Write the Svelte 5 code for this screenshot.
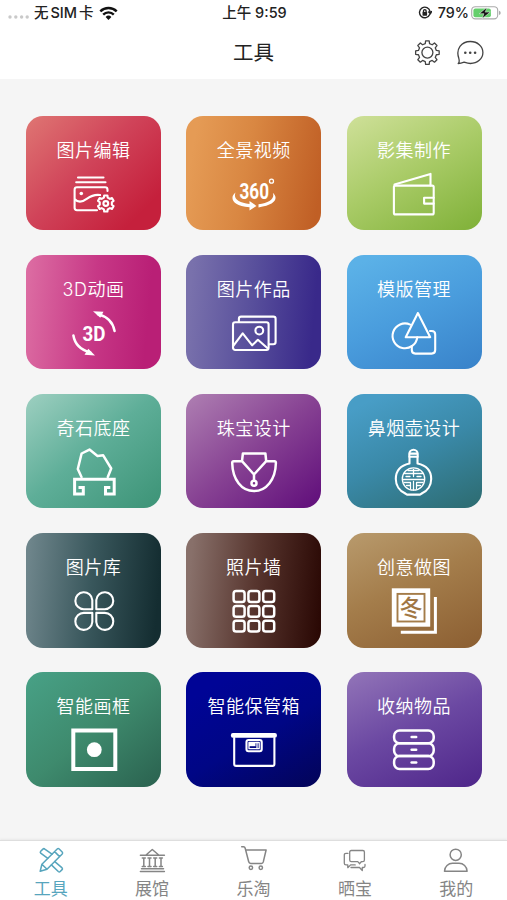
<script lang="ts">
	interface Tool {
		id: string;
		label: string;
	}

	const tools: Tool[] = [
		{ id: 'edit', label: '图片编辑' },
		{ id: 'panorama', label: '全景视频' },
		{ id: 'album', label: '影集制作' },
		{ id: 'anim', label: '3D动画' },
		{ id: 'works', label: '图片作品' },
		{ id: 'template', label: '模版管理' },
		{ id: 'stone', label: '奇石底座' },
		{ id: 'jewel', label: '珠宝设计' },
		{ id: 'snuff', label: '鼻烟壶设计' },
		{ id: 'library', label: '图片库' },
		{ id: 'wall', label: '照片墙' },
		{ id: 'creative', label: '创意做图' },
		{ id: 'frame', label: '智能画框' },
		{ id: 'safe', label: '智能保管箱' },
		{ id: 'storage', label: '收纳物品' }
	];

	const tabs = [
		{ id: 'tools', label: '工具' },
		{ id: 'hall', label: '展馆' },
		{ id: 'shop', label: '乐淘' },
		{ id: 'share', label: '晒宝' },
		{ id: 'me', label: '我的' }
	];

	const cells = [4.6, 19.4, 34.2];
	const drawers = [4.5, 17.3, 30.1];

	let active = $state('tools');

	// Closed outline of a cog, alternating between root and tip radius.
	function cog(cx: number, cy: number, teeth: number, root: number, tip: number): string {
		const step = (Math.PI * 2) / teeth;
		const at = (a: number, r: number) =>
			`${(cx + Math.sin(a) * r).toFixed(2)} ${(cy - Math.cos(a) * r).toFixed(2)}`;
		let d = '';
		for (let i = 0; i < teeth; i++) {
			const a = i * step;
			d += `${i ? 'L' : 'M'}${at(a - step * 0.3, root)}L${at(a - step * 0.19, tip)}`;
			d += `L${at(a + step * 0.19, tip)}L${at(a + step * 0.3, root)}`;
		}
		return d + 'Z';
	}
</script>

<div class="screen">
	<div class="status">
		<div class="side">
			<svg class="dots" width="21" height="18" viewBox="0 0 21 18" aria-hidden="true">
				<circle cx="2" cy="13" r="1.7" />
				<circle cx="7.8" cy="13" r="1.7" />
				<circle cx="13.6" cy="13" r="1.7" />
				<circle cx="19.2" cy="13" r="1.7" />
			</svg>
			<span class="carrier"><span>无</span>SIM<span>卡</span></span>
			<svg class="wifi" width="19" height="15" viewBox="0 0 19 15" aria-hidden="true">
				<path d="M1.3 5.4a11.6 11.6 0 0 1 16.4 0M4.2 8.6a7.5 7.5 0 0 1 10.6 0" />
				<path class="solid" d="M6.6 11a4.1 4.1 0 0 1 5.8 0L9.5 14Z" />
			</svg>
		</div>
		<span class="time">上午 9:59</span>
		<div class="side right">
			<svg class="lock" width="14" height="14" viewBox="0 0 14 14" aria-hidden="true">
				<path d="M11.7 8.5A5.3 5.3 0 1 1 12 5.5M10.6 5.9l1.7 1.9 1.2-2.2" />
				<rect x="4.5" y="6" width="4.6" height="3.7" rx=".6" />
				<path d="M5.5 6V4.9a1.3 1.3 0 0 1 2.6 0V6" />
			</svg>
			<span class="percent">79%</span>
			<svg class="battery" width="30" height="14" viewBox="0 0 30 14" aria-hidden="true">
				<rect class="shell" x=".7" y=".7" width="26" height="12.2" rx="3.6" />
				<rect class="charge" x="2.4" y="2.4" width="17.5" height="8.8" rx="2" />
				<path class="cap" d="M28 4.8q1.7.6 1.7 2.1T28 9Z" />
				<path class="bolt" d="M15.8 1.4 8.3 7.7h4.6l-1.6 4.8 7.9-6.4h-4.7Z" />
			</svg>
		</div>
	</div>

	<header>
		<h1>工具</h1>
		<div class="actions">
			<button type="button" aria-label="设置">
				<svg width="28" height="28" viewBox="0 0 28 28">
					<path d={cog(14.4, 13.6, 8, 9.2, 11.9)} />
					<circle cx="14.4" cy="13.6" r="5.5" />
				</svg>
			</button>
			<button type="button" aria-label="消息">
				<svg width="28" height="28" viewBox="0 0 28 28">
					<path
						d="M2.2 24.5c1.5-1.3 1.2-3 .6-5.2C-.5 10 5.4 2.5 14.4 2.5c7 0 12.500 4.7 12.500 11s-5.500 11-12.500 11c-3 0-4.7-.8-6.3-1.300-2 .8-3.7 1.300-5.900 1.300Z"
					/>
					<g class="ink">
						<circle cx="9.3" cy="13.8" r="1.3" />
						<circle cx="14.2" cy="13.8" r="1.3" />
						<circle cx="19.1" cy="13.8" r="1.3" />
					</g>
				</svg>
			</button>
		</div>
	</header>

	<main>
		{#each tools as tool (tool.id)}
			<button type="button" class="card {tool.id}">
				<span class="label">{tool.label}</span>
				<svg class="icon" width="50" height="50" viewBox="0 0 50 50" aria-hidden="true">
					{#if tool.id === 'edit'}
						<path d="M9 7.5h25.5M7.2 12.3h29.3" />
						<path
							d="M38.5 21v-1.3q0-2.4-2.4-2.4H8q-2.4 0-2.4 2.4v18.1q0 2.4 2.4 2.4h20M5.6 29c4 4.5 8.5 2.7 12.5-.3s7-4.5 13-3.7"
						/>
						<circle class="fill" cx="12.3" cy="23.5" r="1.8" />
						<path d={cog(36.8, 33.5, 6, 6.2, 8.2)} />
						<circle cx="36.8" cy="33.5" r="2.4" />
					{:else if tool.id === 'panorama'}
						<text class="deg" x="10.5" y="29" textLength="29.5" lengthAdjust="spacingAndGlyphs">360</text>
						<circle class="thin" cx="42.5" cy="11.2" r="2" />
						<path
							class="fill"
							d="M6.5 22.6C.8 27 2 35.5 20.5 37.3v3.2l7-4.6-7-4.8V34C9.500 33 4 28.500 6.500 22.600ZM43.800 22.800c5.600 4.800 3.500 12.200-14.300 14.600v-3.200c11.300-1.400 16.500-5.700 14.300-11.400Z"
						/>
					{:else if tool.id === 'album'}
						<rect x="4.900" y="15.6" width="39.8" height="28.8" rx="1.5" />
						<path d="M5.5 14.6 41.5 3.9v11.5M44.7 27.8h-9.600v5.800h9.600" />
					{:else if tool.id === 'anim'}
						<text class="three" x="13.6" y="32" textLength="23" lengthAdjust="spacingAndGlyphs">3D</text>
						<path class="bold" d="M29 5.2Q43 8.5 45.6 22M21.3 43.5Q6.5 39.5 4.4 26.5" />
						<path class="fill" d="m24 2.3 10.500.4-3.200 6ZM26 46.500l-10.500-.7 3.800-6Z" />
					{:else if tool.id === 'works'}
						<path d="M9.900 13V9.800q0-2.200 2.200-2.200h32.300q2.200 0 2.200 2.200v23.300q0 2.200-2.200 2.200h-4.500" />
						<rect x="4" y="13.2" width="35.6" height="27.8" rx="2.2" />
						<path d="m4.300 36.800 9.400-12.500 9.500 12 5.700-5.500 10 8.700" />
						<circle cx="30.3" cy="21.6" r="3.9" />
					{:else if tool.id === 'template'}
						<path d="M28.900 4 16.700 28.200h24.500Z" />
						<path d="M21.200 15.600a12.400 12.400 0 1 0 7.100 12.600" />
						<path d="M41 22h1.700q3.500 0 3.500 3.500v15.600q0 3.500-3.500 3.500H26.300q-3.500 0-3.500-3.500v-4" />
					{:else if tool.id === 'stone'}
						<path
							class="bold"
							d="M12.500 29 8.800 21l3.800-15.500 7.900-3.900 8 6.300 5.700-.6 8 13.200L38.800 29"
						/>
						<path
							class="frame-line"
							d="M9.500 39.400h4.800v6.500H5.600V31.200h39.600v14.700h-8.700v-6.500h4.800"
						/>
					{:else if tool.id === 'jewel'}
						<path
							class="bold"
							d="M13 13.200H4.700q-1.500 0-1.500 1.800C3.600 31.500 12.500 43 25 43s21.500-11.500 21.900-28q0-1.800-1.500-1.800h-8.200l-.8-7.700H13.900ZM13 13.200 25 26.500l12.200-13.300M25 26.500v5.500"
						/>
						<circle class="bold" cx="25" cy="35.3" r="2.5" />
					{:else if tool.id === 'snuff'}
						<path d="M20.300 8.800V6a4.200 4.200 0 0 1 8.400 0v2.800ZM20.300 5.600h8.400" />
						<path
							d="M20.500 9v6.500C10.500 17.600 6.800 24 6.800 31c0 6.500 4 11.700 8.700 14l2.500 1.600h13L33.500 45c4.700-2.300 8.700-7.500 8.700-14 0-7-3.700-13.400-13.700-15.500V9"
						/>
						<circle class="thin" cx="24.500" cy="31" r="11.2" />
						<path
							class="thin"
							d="M13.500 31.500h22M15.500 25.500h18M19 22.500h11M17 28.500h4m3.500-7v7m3.500 0h4M15 34.500h6.500v6M34 34.500h-6.500v6M24.500 33.500v8.500M17.500 37.500h4m6 0h4"
						/>
					{:else if tool.id === 'library'}
						<path
							d="M23.300 22.200V13a8.500 8.500 0 1 0-8.500 9.200ZM27.300 22.200V13a8.500 8.500 0 1 1 8.500 9.200ZM23.300 25.900V35a8.500 8.500 0 1 1-8.500-9.100ZM27.300 25.900V35a8.500 8.500 0 1 0 8.500-9.100Z"
						/>
					{:else if tool.id === 'wall'}
						{#each cells as y}
							{#each cells as x}
								<rect class="bold" {x} y={y - 0.5} width="11" height="10.9" rx="2.6" />
							{/each}
						{/each}
					{:else if tool.id === 'creative'}
						<rect class="fill" x="2.8" y="1.3" width="38.4" height="38.4" />
						<rect class="cut" x="8.5" y="6.900" width="27" height="27.6" />
						<text class="glyph" x="22" y="29" text-anchor="middle">冬</text>
						<path class="frame-line" d="M46.400 10v35.300H11.800" />
					{:else if tool.id === 'frame'}
						<rect class="heavy" x="4.3" y="4.5" width="42" height="38.5" />
						<circle class="fill" cx="25.3" cy="23.7" r="7.4" />
					{:else if tool.id === 'safe'}
						<rect class="fill" x="1.9" y="7" width="46" height="4.7" rx="2" />
						<path d="M5.200 12v26q0 1.900 1.900 1.900h36.400q1.900 0 1.900-1.900V12" />
						<rect x="17.5" y="14" width="15.2" height="11.3" rx="2" />
						<rect class="thin" x="20" y="16.5" width="10.2" height="6.2" />
						<path class="fill" d="M20 16.500h6.500v3.700H20Z" />
						<path class="thin" d="M28 16.500v6" />
					{:else}
						{#each drawers as y}
							<rect class="bold" x="5.100" {y} width="39.6" height="12.8" rx="5.4" />
							<path class="bold" d="M22.600 {y + 6.4}h4.600" />
						{/each}
					{/if}
				</svg>
			</button>
		{/each}
	</main>

	<nav>
		{#each tabs as tab (tab.id)}
			<button
				type="button"
				class="tab"
				class:active={active === tab.id}
				onclick={() => (active = tab.id)}
			>
				<svg width="28" height="28" viewBox="0 0 28 28" aria-hidden="true">
					{#if tab.id === 'tools'}
						<path
							d="M3.200 25.300 4.900 18.300 20.200 3q1-.9 2 0l3 3q.9 1 0 2L10 23.300ZM4.900 18.300l5.100 5M17.600 5.600l5 5"
						/>
						<path
							d="M10.800 12.400 3.700 7.200q-.9-1 0-1.900l2.200-2.200q1-.9 1.900 0l7.200 5.100M17.800 15.600l7.300 6.300q.8.900 0 1.700l-1.900 1.900q-.9.900-1.900 0l-6.900-6.600"
						/>
					{:else if tab.id === 'hall'}
						<path
							d="M2.400 9.300h24M8 9l6.300-5.500L20.700 9M3.500 22.700h22M2.400 25.400h24M5.800 12v8.500M11.500 12v8.500M17.200 12v8.500M23 12v8.500M4.300 12h3m2.700 0h3m2.700 0h3m2.700 0h3M4.300 20.500h3m2.700 0h3m2.700 0h3m2.700 0h3"
						/>
					{:else if tab.id === 'shop'}
						<path d="M1.700.8h1.800q1.300 0 1.700 1.500l3.500 13.500q.4 1.600 2 1.600h10.800q1.400 0 1.800-1.500L26.100 4H5.800" />
						<circle cx="10.900" cy="21.8" r="1.7" />
						<circle cx="20.800" cy="21.8" r="1.7" />
					{:else if tab.id === 'share'}
						<g class="fine">
							<path
								d="M10.300 4.500h11.500q1.600 0 1.600 1.600v8q0 1.600-1.600 1.600h-1.500l-1.800 2-1.700-2h-6.500q-1.600 0-1.600-1.600v-8q0-1.600 1.600-1.600Z"
							/>
							<path d="M7 7.300H5q-1.700 0-1.700 1.600v8.300q0 1.700 1.700 1.700h1.800v2.800l2.800-2.800h4.600" />
							<path d="M10 21.500h8.500l2.800 3v-3h1.200q1.500 0 1.500-1.500v-1.500" />
						</g>
					{:else}
						<circle cx="13.700" cy="8.800" r="5.6" />
						<path d="M2.500 25.200c0-4.700 4-8 8-8h6.600c4 0 8 3.300 8 8Z" />
					{/if}
				</svg>
				<span>{tab.label}</span>
			</button>
		{/each}
	</nav>
</div>

<style>
	:global(body) {
		background: #f5f5f5;
	}
	.screen {
		display: flex;
		flex-direction: column;
		width: 507px;
		height: 900px;
		overflow: hidden;
		background: #f5f5f5;
		font-family: Inter, 'Noto Sans CJK SC', sans-serif;
		color: #222;
	}
	button {
		margin: 0;
		padding: 0;
		border: 0;
		background: none;
		font: inherit;
		color: inherit;
	}
	svg {
		display: block;
		flex: none;
		fill: none;
		stroke: currentColor;
		stroke-linecap: round;
		stroke-linejoin: round;
	}

	.status {
		display: grid;
		grid-template-columns: 1fr auto 1fr;
		align-items: center;
		height: 26px;
		padding: 0 6px 0 8px;
		background: #fff;
		font-size: 14.5px;
		font-weight: 500;
		line-height: 26px;
		white-space: nowrap;
	}
	.side {
		display: flex;
		align-items: center;
	}
	.side.right {
		justify-content: flex-end;
	}
	.dots {
		fill: #c9c9c9;
		stroke: none;
	}
	.carrier {
		display: flex;
		gap: 2px;
		margin: 0 5px;
	}
	.wifi {
		stroke: #111;
		stroke-width: 2.4;
		stroke-linecap: butt;
	}
	.wifi .solid {
		fill: #111;
		stroke: none;
	}
	.lock {
		stroke-width: 1.4;
	}
	.lock rect {
		fill: currentColor;
		stroke: none;
	}
	.percent {
		margin: 0 2px 0 6px;
		font-size: 14.3px;
	}
	.shell {
		stroke: #aaa;
		stroke-width: 1.1;
	}
	.charge {
		fill: #65cf6c;
		stroke: none;
	}
	.cap {
		fill: #aaa;
		stroke: none;
	}
	.bolt {
		fill: #111;
		stroke: #fff;
		stroke-width: 0.5;
	}

	header {
		display: grid;
		grid-template-columns: 1fr auto 1fr;
		align-items: center;
		height: 53px;
		padding: 0 23px;
		background: #fff;
	}
	h1 {
		grid-column: 2;
		margin: 0;
		font-size: 20.5px;
		font-weight: 400;
		line-height: 30px;
	}
	.actions {
		display: flex;
		justify-content: flex-end;
		gap: 15px;
		color: #444;
	}
	.actions svg {
		stroke-width: 1.3;
	}
	.ink {
		fill: currentColor;
		stroke: none;
	}

	main {
		flex: 1;
		display: grid;
		grid-template-columns: repeat(3, 135px);
		grid-auto-rows: 114.5px;
		align-content: start;
		gap: 24.7px 25.3px;
		padding: 36.5px 0 0 26px;
	}
	.card {
		display: flex;
		flex-direction: column;
		align-items: center;
		border-radius: 17px;
		color: #fff;
	}
	.label {
		height: 32px;
		margin: 19px 0 3px;
		font-size: 18px;
		font-weight: 350;
		line-height: 32px;
		letter-spacing: 0.5px;
		white-space: nowrap;
	}
	.icon {
		stroke-width: 2.1;
	}
	.icon .fill {
		fill: currentColor;
		stroke: none;
	}
	.icon .thin {
		stroke-width: 1.3;
	}
	.icon .bold {
		stroke-width: 2.5;
	}
	.icon .heavy {
		stroke-width: 4;
		stroke-linejoin: miter;
	}
	.icon .frame-line {
		stroke-width: 3;
		stroke-linecap: butt;
		stroke-linejoin: miter;
	}
	.icon .cut {
		stroke: #a47c49;
		stroke-width: 1.9;
		stroke-linejoin: miter;
	}
	.icon text {
		fill: currentColor;
		stroke: none;
	}
	.icon .deg {
		font: 700 22.5px Roboto, sans-serif;
	}
	.icon .three {
		font: 700 20px Roboto, sans-serif;
	}
	.icon .glyph {
		fill: #a17744;
		font-size: 23px;
		font-weight: 500;
	}

	.edit { background: linear-gradient(135deg, #df7673 0%, #d04359 45%, #c5203c 85%); }
	.panorama { background: linear-gradient(100deg, #e59b55 8%, #d98742 45%, #c05f25 95%); }
	.album { background: linear-gradient(150deg, #cbde94 5%, #a9cb67 48%, #83b33c 95%); }
	.anim { background: linear-gradient(95deg, #dc6ca2 2%, #c73886 50%, #b91f76 88%); }
	.works { background: linear-gradient(95deg, #7971ac 5%, #574e9b 50%, #39298a 92%); }
	.template { background: linear-gradient(155deg, #5bb1e7 8%, #4a9ddd 50%, #3983ca 98%); }
	.stone { background: linear-gradient(140deg, #9bcebf 2%, #5eae98 48%, #40967a 94%); }
	.jewel { background: linear-gradient(140deg, #ad7db1 2%, #874293 50%, #64137d 94%); }
	.snuff { background: linear-gradient(155deg, #489dc6 10%, #3a89a8 50%, #2e6e75 95%); }
	.library { background: linear-gradient(95deg, #6e858b 3%, #39575c 48%, #142d31 95%); }
	.wall { background: linear-gradient(95deg, #88706a 5%, #58362f 50%, #2a0804 98%); }
	.creative { background: linear-gradient(155deg, #b69769 5%, #a47d4b 45%, #8c5f32 98%); }
	.frame { background: linear-gradient(140deg, #479f84 5%, #3e8a6d 50%, #2b6350 98%); }
	.safe { background: linear-gradient(150deg, #000496 15%, #000685 55%, #03045a 98%); }
	.storage { background: linear-gradient(155deg, #9072b7 3%, #6b48a2 48%, #51298c 95%); }

	nav {
		display: flex;
		height: 60px;
		border-top: 1px solid #dedede;
		box-shadow: 0 -1px 2px #e8e8e8;
		box-sizing: border-box;
		background: #fff;
	}
	.tab {
		flex: 1;
		display: flex;
		flex-direction: column;
		align-items: center;
		padding-top: 5px;
		font-size: 17px;
		line-height: 30px;
		color: #858585;
	}
	.tab svg {
		stroke-width: 1.5;
	}
	.tab .fine {
		stroke-width: 1.3;
	}
	.tab.active {
		color: #57a5bd;
	}
</style>
